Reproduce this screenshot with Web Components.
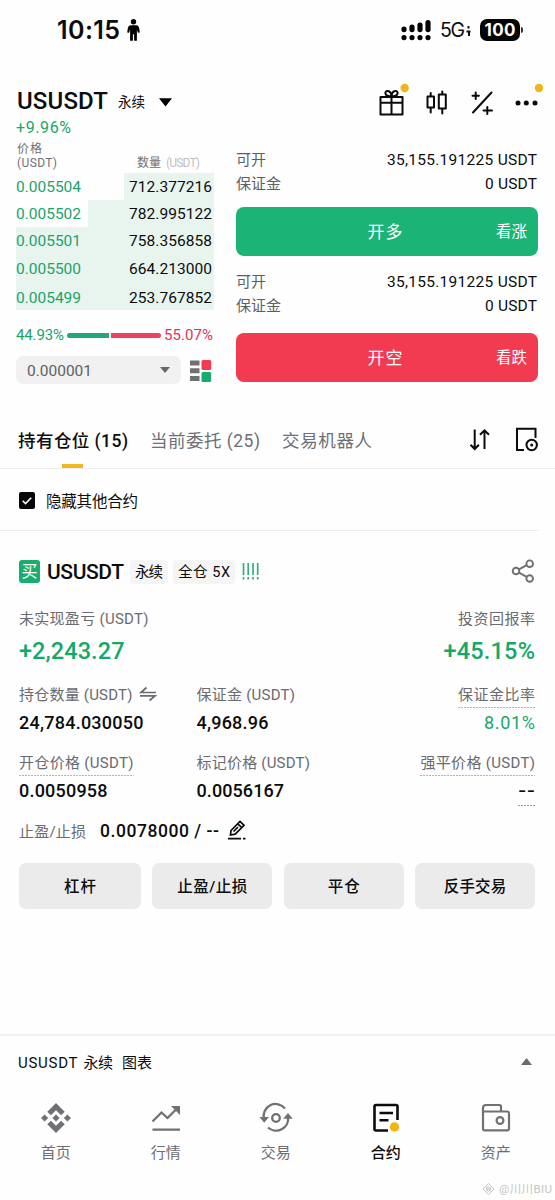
<!DOCTYPE html>
<html lang="zh-CN">
<head>
<meta charset="utf-8">
<title>USUSDT 永续</title>
<style>
body{margin:0;background:#fefefe;color:#0c0c0d;font-family:Roboto,"Noto Sans CJK SC",sans-serif;width:555px;height:1200px;overflow:hidden}
</style>
</head>
<body>
<trade-app></trade-app>
<script>
const fits = [];
function define(name, css, html, after) {
  customElements.define(name, class extends HTMLElement {
    connectedCallback() {
      if (this.shadowRoot) return;
      const markup = typeof html === 'function' ? html(n => this.getAttribute(n)) : html;
      this.attachShadow({ mode: 'open' }).innerHTML =
        `<style>:host{display:block;box-sizing:border-box}*{box-sizing:border-box}svg{display:block;flex:none;overflow:visible}${css}</style>${markup}`;
      if (after) after(this);
    }
  });
}

/* Single line of text whose tracking is adjusted to a given advance width. */
define('fit-text',
  ':host{display:inline-block;flex:none;white-space:nowrap;line-height:1}span{display:inline-block;transform:translateY(var(--dy,2px))}',
  '<span><slot></slot></span>', el => fits.push(el));

function fitAll() {
  for (const el of fits) {
    const w = parseFloat(el.getAttribute('w'));
    if (!w) continue;
    const n = [...el.textContent].length;
    const span = el.shadowRoot.querySelector('span');
    const ls = (w - span.getBoundingClientRect().width) / (n - 1);
    span.style.letterSpacing = ls + 'px';
    span.style.marginRight = -ls + 'px';
  }
}

define('status-bar',
  `:host{display:flex;height:60px;padding:0 32px 0 57px;align-items:center;font-family:Inter,sans-serif;--dy:0px}
   fit-text{font-size:25px;font-weight:600}.p{margin-left:6px}.s{margin-left:auto}.g{font-size:19.5px;font-weight:400;margin-left:9px;--dy:1px}
   .d{margin:0 9px 0 1px}.bat{background:#050505;color:#fff;border-radius:7px;width:40px;height:22px;display:flex;align-items:center;justify-content:center}
   .bat fit-text{font-size:17px;font-weight:700}.nub{width:2px;height:6px;background:#333;border-radius:0 2px 2px 0;margin-left:1px}`,
  `<fit-text w="63">10:15</fit-text>
   <svg class="p" width="14" height="22" viewBox="0 0 14 22"><circle cx="7.500" cy="2.700" r="2.700"/><path d="M4.500 6.300h6q2.200 0 2.600 2.500l.7 4.700-1.900.3-1-3.300V21.700H8.100v-6.500H6.900v6.500H4.100V10.500l-1 3.300-1.900-.3.700-4.700Q2.300 6.300 4.500 6.300z"/></svg>
   <svg class="s" width="30" height="21" viewBox="0 0 30 21"><g stroke="#050505" stroke-width="5.200" stroke-linecap="round"><path d="M3 9v.6M11 7v2.600M19 5v4.600M27 2.700v6.900M3 17.600v.01M11 17.600v.01M19 17.600v.01M27 17.600v.01"/></g></svg>
   <fit-text class="g" w="25">5G</fit-text>
   <svg class="d" width="5" height="14" viewBox="0 0 5 14"><path d="M2.500 3v2.500M.5 8.500h4M3 9v4" stroke="#111" stroke-width="2"/></svg>
   <div class="bat"><fit-text w="31">100</fit-text></div><i class="nub"></i>`);

define('pair-header',
  `:host{display:flex;height:57px;padding:24px 12px 0 17px;align-items:flex-start}
   .n{font-size:24px;font-weight:500;margin-top:5px;--dy:0px}.y{font-size:13.500px;margin:11px 0 0 10px;--dy:1px}.t{margin:14px 0 0 14px}
   .i{margin-left:auto}`,
  `<fit-text class="n" w="91">USUSDT</fit-text><fit-text class="y" w="27">永续</fit-text>
   <svg class="t" width="13" height="9" viewBox="0 0 13 9"><path d="M0 .3h13L6.500 8.500z"/></svg>
   <svg class="i" width="164" height="34" viewBox="379 84 164 34" fill="none" stroke="#0b0b0b" stroke-width="2" stroke-linejoin="round" stroke-linecap="round">
    <path d="M380.500 97h22v17.500h-22zM380.500 102.700h22M391.500 97v17.500M391.500 96.500c-8 0-7-6-3.600-5.500 2.600.3 3.400 3 3.600 5.500.2-2.500 1-5.200 3.600-5.500 3.400-.5 4.400 5.500-3.600 5.500z"/>
    <path d="M427.500 96.500h6.500v11h-6.500zM438.800 94.500h7v14h-7zM430.700 93v3.500M430.700 107.500v5M442.300 91.500v3M442.300 108.500v5"/>
    <path d="M473 112.500L491.500 92.500M475.700 92.500v6.500M472.500 95.700h6.400M487.300 107v7M483.500 110.500h8.500"/>
    <g fill="#0b0b0b" stroke="none"><circle cx="518" cy="103" r="2.500"/><circle cx="526.300" cy="103" r="2.500"/><circle cx="535" cy="103" r="2.500"/></g>
    <g fill="#f0b619" stroke="none"><circle cx="404.700" cy="88" r="4.200"/><circle cx="539" cy="88" r="4.200"/></g></svg>`);

define('book-row',
  `:host{display:flex;align-items:center;justify-content:space-between;height:var(--h,27px);padding:0 2px 0 0;
   background:linear-gradient(#e8f5ef,#e8f5ef) right/var(--depth) 100% no-repeat;font-size:15.500px;--dy:.900px}
   .p{color:#1ba36b}`,
  a => `<fit-text class="p" w="65">${a('price')}</fit-text><fit-text w="83">${a('amount')}</fit-text>`);

define('order-book',
  `:host{width:198px;padding-top:1px}.pct{display:block;height:20px;line-height:20px;font-size:16px;color:#16a869;--dy:0px}
   .h{display:flex;height:35px;font-size:12px;color:#6e7176;justify-content:space-between;padding:5px 14px 0 1px;align-items:flex-start;--dy:-.500px}
   .h div{display:flex;flex-direction:column;gap:2px}.h .q{flex-direction:row;padding-top:14px;gap:5px}.q fit-text+fit-text{color:#c0c2c5}
   .r{display:flex;height:50px;align-items:center;font-size:15px;color:#1ba36b;margin-right:-1px;--dy:0px}
   .r i{height:5px;background:#20a977;border-radius:3px 0 0 3px;width:42px;margin-left:3px}
   .r i+i{background:#ec4460;border-radius:0 3px 3px 0;width:50px;margin:0 3px 0 2px}.r .d{color:#dd3458}
   .b{display:flex;gap:9px;align-items:center}.s{width:165px;height:28px;border-radius:7px;background:#f1f1f1;padding:0 11px;display:flex;align-items:center;justify-content:space-between;font-size:15.500px;color:#5e6063;margin-top:-4px}
   .b>svg{margin-top:-3px}`,
  `<fit-text class="pct" w="55">+9.96%</fit-text>
   <div class="h"><div><fit-text w="25">价格</fit-text><fit-text w="40">(USDT)</fit-text></div>
   <div class="q"><fit-text w="24">数量</fit-text><fit-text w="34">(USDT)</fit-text></div></div>
   <book-row price="0.005504" amount="712.377216" style="--depth:90px"></book-row>
   <book-row price="0.005502" amount="782.995122" style="--depth:126px"></book-row>
   <book-row price="0.005501" amount="758.356858" style="--depth:198px"></book-row>
   <book-row price="0.005500" amount="664.213000" style="--depth:198px;--h:29px"></book-row>
   <book-row price="0.005499" amount="253.767852" style="--depth:198px;--h:27px;padding-top:2px"></book-row>
   <div class="r"><fit-text w="48">44.93%</fit-text><i></i><i></i><fit-text class="d" w="49">55.07%</fit-text></div>
   <div class="b"><div class="s"><fit-text w="65">0.000001</fit-text><svg width="10" height="6" viewBox="0 0 10 6"><path d="M0 0h10L5 6z" fill="#66686b"/></svg></div>
   <svg width="21" height="22" viewBox="0 0 21 22"><path d="M0 .5h9.500v5H0zM0 8.200h9.500v5H0zM0 16h9.500v5H0z" fill="#707070"/><rect x="11.500" width="9.700" height="10" rx="1.500" fill="#f23b53"/><rect x="11.500" y="12" width="9.700" height="10" rx="1.500" fill="#14ac6f"/></svg></div>`);

define('trade-button',
  `:host{display:grid;grid-template-columns:1fr auto 1fr;align-items:center;height:49px;border-radius:8px;color:#fff;background:var(--c);padding:0 11px 0 7px;--dy:1px}
   .m{font-size:17px}.s{font-size:15.500px;justify-self:end}`,
  a => `<span></span><fit-text class="m" w="35">${a('label')}</fit-text><fit-text class="s" w="31">${a('hint')}</fit-text>`);

define('order-side',
  `:host{height:122px;--dy:.900px}.r{display:flex;justify-content:space-between;align-items:center;height:23.500px;font-size:15.500px;padding-right:1px}.k{color:#5c5f63;font-size:15px}trade-button{margin-top:var(--gap,12px)}`,
  a => `<div class="r"><fit-text class="k" w="30">可开</fit-text><fit-text w="150">35,155.191225 USDT</fit-text></div>
   <div class="r"><fit-text class="k" w="45">保证金</fit-text><fit-text w="52">0 USDT</fit-text></div>
   <trade-button label="${a('label')}" hint="${a('hint')}" style="--c:${a('color')}"></trade-button>`);

define('trade-desk',
  ':host{display:flex;gap:22px;height:291px;padding:0 17px 0 16px}.o{flex:1;padding-top:31px}',
  `<order-book></order-book><div class="o"><order-side label="开多" hint="看涨" color="#1bb376"></order-side>
   <order-side label="开空" hint="看跌" color="#f23a50" style="--gap:16px"></order-side></div>`);

define('position-tabs',
  `:host{display:flex;height:61px;border-bottom:1.500px solid #eeeeef;padding:0 17px 0 18px;font-size:17.500px;color:#6c6f74}
   .t{display:flex;align-items:center;position:relative;height:64px;margin-right:22px}
   .on{color:#0c0c0d;font-weight:500}.on::after{content:"";position:absolute;left:44px;bottom:4px;width:21px;height:4px;background:#efb921}
   .i{margin:20px 0 0 auto}`,
  `<div class="t on"><fit-text w="110">持有仓位 (15)</fit-text></div><div class="t"><fit-text w="110">当前委托 (25)</fit-text></div><div class="t"><fit-text w="90">交易机器人</fit-text></div>
   <svg class="i" width="68" height="24" viewBox="470 428 68 24" fill="none" stroke="#0b0b0b" stroke-width="2">
   <path d="M474.700 429.500v19M470.500 444.800l4.200 4.200 4.200-4.200M484.500 449v-18.500M480 434.800l4.500-4.500 4.500 4.500"/>
   <path d="M524 450h-7v-21.200h18.500V438"/><circle cx="531.700" cy="445" r="5.200"/><circle cx="531.700" cy="445" r="1.500" fill="#0b0b0b" stroke="none"/></svg>`);

define('filter-row',
  ':host{display:flex;height:62px;margin-right:17px;padding:2px 0 0 19px;border-bottom:1px solid #e9eaeb;align-items:center;gap:11px;font-size:15.500px}',
  `<svg width="16" height="17" viewBox="0 0 16 17"><rect width="16" height="17" rx="2" fill="#080808"/><path d="M3.700 8.700l2.800 2.800 5.700-5.700" fill="none" stroke="#fff" stroke-width="1.600"/></svg><fit-text w="92">隐藏其他合约</fit-text>`);

define('metric-item',
  `:host{display:flex;flex-direction:column;align-items:var(--al,flex-start)}
   .k{font-size:15px;color:#686b70;height:25px;line-height:25px;display:flex;align-items:center;gap:7px}
   .u{height:27px;padding-bottom:2px;margin-bottom:-2px;background:repeating-linear-gradient(90deg,#b4b4b6 0 2px,transparent 2px 3px) bottom/100% 1px no-repeat}
   .v{font-size:18px;font-weight:500;line-height:31px;margin-top:1px;color:var(--vc,#0c0c0d);--dy:.400px}
   :host([big]) .v{font-size:23.500px;line-height:37px;--dy:1.500px}:host([thin]) .v{font-weight:400}
   .dash{font-family:Inter,sans-serif;background:repeating-linear-gradient(90deg,#9b9b9d 0 2px,transparent 2px 3px) bottom/100% 1px no-repeat}`,
  a => `<div class="k ${a('under') !== null ? 'u' : ''}"><fit-text w="${a('kw')}">${a('k')}</fit-text><slot></slot></div>
   <fit-text class="v ${a('dash') !== null ? 'dash' : ''}" w="${a('vw')}">${a('v')}</fit-text>`);

define('action-button',
  ':host{display:flex;align-items:center;justify-content:center;height:46px;border-radius:7px;background:#ebebeb;font-size:15.500px;font-weight:500}',
  a => `<fit-text w="${a('w')}">${a('label')}</fit-text>`);

define('position-card',
  `:host{padding:27px 20px 0 19px;height:503px}
   .h{display:flex;height:27px;align-items:center;--dy:1.500px}
   .b{width:21px;height:23px;border-radius:3px;background:#19ae70;color:#fff;display:flex;align-items:center;justify-content:center;font-size:16px;line-height:23px}
   .n{font-size:21px;font-weight:500;margin:0 6px 0 7px;--dy:.500px}.g{background:#f5f5f6;border-radius:4px;height:24px;padding:0 5px;display:flex;align-items:center;font-size:14.500px;margin-right:6px}.g+.g{margin-left:-1px;margin-right:7px}
   .sh{margin-left:auto;margin-top:-1px}
   .g3{display:grid;grid-template-columns:177.500px 1fr auto;height:68px}.r{--al:flex-end}.gr{--vc:#14a968}
   .top{display:flex;justify-content:space-between;margin-top:20px;height:76px}
   .tp{display:flex;align-items:center;height:22px;font-size:15px;color:#686b70;margin-top:2px}.tp .v{font-size:17.500px;font-weight:500;color:#0c0c0d;margin:0 9px 0 14px;--dy:1.500px}
   .a{display:grid;grid-template-columns:122px 120px 120px 120px;justify-content:space-between;margin-top:22px}`,
  `<div class="h"><span class="b">买</span><fit-text class="n" w="77">USUSDT</fit-text><span class="g"><fit-text w="28">永续</fit-text></span><span class="g"><fit-text w="52">全仓 5X</fit-text></span>
   <svg width="17" height="17" viewBox="0 0 17 17"><path d="M1.500 0v12M6.200 0v12M11 0v12M15.700 0v12M1.500 14v2.500M6.200 14v2.500M11 14v2.500M15.700 14v2.500" stroke="#38ad7b" stroke-width="1.700"/></svg>
   <svg class="sh" width="23" height="24" viewBox="0 0 23 24" fill="none" stroke="#707174" stroke-width="1.900"><circle cx="4" cy="12" r="3.300"/><circle cx="17.700" cy="4.700" r="3.300"/><circle cx="17.700" cy="19.500" r="3.300"/><path d="M7 10.400l7.700-4.200M7 13.700l7.700 4.200"/></svg></div>
   <div class="top"><metric-item big class="gr" k="未实现盈亏 (USDT)" kw="129.500" v="+2,243.27" vw="105.500"></metric-item><metric-item big class="r gr" k="投资回报率" kw="77" v="+45.15%" vw="91.500"></metric-item></div>
   <div class="g3"><metric-item k="持仓数量 (USDT)" kw="113.500" v="24,784.030050" vw="124.500"><svg width="16" height="14" viewBox="0 0 16 14" fill="none" stroke="#686b70" stroke-width="1.700"><path d="M6.500.500L1 5.500h15M0 8.800h15L9.500 13.500"/></svg></metric-item>
   <metric-item k="保证金 (USDT)" kw="98.500" v="4,968.96" vw="72"></metric-item><metric-item under thin class="r gr" k="保证金比率" kw="77" v="8.01%" vw="51"></metric-item></div>
   <div class="g3"><metric-item under k="开仓价格 (USDT)" kw="114.500" v="0.0050958" vw="88.500"></metric-item>
   <metric-item k="标记价格 (USDT)" kw="113.500" v="0.0056167" vw="87.500"></metric-item><metric-item under dash class="r" k="强平价格 (USDT)" kw="114.500" v="--" vw="17"></metric-item></div>
   <div class="tp"><fit-text w="67">止盈/止损</fit-text><fit-text class="v" w="119">0.0078000 / --</fit-text>
   <svg width="19" height="20" viewBox="0 0 19 20" fill="none" stroke="#0b0b0b" stroke-width="1.700"><path d="M3 10.500L12 1.500l4 3.800L7.200 14.200 2.500 15zM9.800 3.800l4 3.800M5.500 11.500l4.500-4.500M0 18.700h13M15 18.700h2.500"/></svg></div>
   <div class="a"><action-button w="32" label="杠杆"></action-button><action-button w="70" label="止盈/止损"></action-button><action-button w="32" label="平仓"></action-button><action-button w="62.500" label="反手交易"></action-button></div>`);

define('chart-bar',
  ':host{display:flex;height:56px;border-top:2px solid #f1f1f2;padding:0 23px 3px 18px;align-items:center;font-size:15px;}svg{margin-left:auto}fit-text{margin-right:6px}fit-text+fit-text{margin-right:9px}',
  `<fit-text w="59.500">USUSDT</fit-text><fit-text w="29.500">永续</fit-text><fit-text w="30">图表</fit-text><svg width="11" height="7" viewBox="0 0 11 7"><path d="M5.500 0L11 7H0z" fill="#6b6d70"/></svg>`);

define('nav-item',
  ':host{display:flex;flex-direction:column;align-items:center;gap:11px;color:#6b6d71;font-size:15px}:host([active]){color:#0b0b0b;font-weight:500}',
  a => `<slot></slot><fit-text w="30">${a('label')}</fit-text>`);

define('bottom-nav',
  ':host{display:grid;grid-template-columns:repeat(5,110px);padding:13px 0 0 .800px;height:92px}',
  `<nav-item label="首页"><svg width="30" height="30" viewBox="0 0 30 30" fill="#707174"><path d="M15 0l8.700 8.700-3.600 3.600L15 7.200l-5.100 5.100-3.600-3.600zM15 30l-8.700-8.700 3.600-3.600 5.100 5.100 5.100-5.100 3.600 3.600zM3.600 11.400L7.200 15l-3.600 3.600L0 15zM26.400 11.400L30 15l-3.600 3.600-3.600-3.600zM15 11.400l3.600 3.600-3.600 3.600-3.600-3.600z"/></svg></nav-item>
   <nav-item label="行情"><svg width="30" height="30" viewBox="0 0 30 30" fill="none" stroke="#707174" stroke-width="2.300"><path d="M1.500 18.500l9-9 6 5.500L27 4.500M1.500 26.700h27.500"/><path d="M20 3h9v9z" fill="#707174" stroke="none"/></svg></nav-item>
   <nav-item label="交易"><svg width="34" height="30" viewBox="0 0 34 30" fill="none" stroke="#707174" stroke-width="2.300"><path d="M5 16A12 12 0 0 1 26 5.500M9 24.500A12 12 0 0 0 29 14"/><path d="M.5 14h9.500L5.200 19.700zM24.200 15.800h9.500L29 10z" fill="#707174" stroke="none"/><circle cx="17" cy="15" r="3.800"/></svg></nav-item>
   <nav-item label="合约" active><svg width="30" height="30" viewBox="0 0 30 30" fill="none" stroke="#0b0b0b" stroke-width="2.600"><path d="M17 27.500H5q-1.500 0-1.500-1.500V3.500Q3.500 2 5 2h20q1.500 0 1.500 1.500V17M8.500 10h13.500M8.500 17.200h9"/><circle cx="23.500" cy="24" r="4.700" fill="#f3b50e" stroke="none"/></svg></nav-item>
   <nav-item label="资产"><svg width="30" height="30" viewBox="0 0 30 30" fill="none" stroke="#707174" stroke-width="2.200"><path d="M2 8.500V25.500q0 1.800 1.800 1.800h22.400q1.800 0 1.800-1.800V10.300q0-1.800-1.800-1.800H2M2 9V4.800Q2 2 5 2h13.500q1.500 0 1.500 1.500V8"/><circle cx="19" cy="17.500" r="3.400"/></svg></nav-item>`);

define('source-mark',
  ':host{display:flex;justify-content:flex-end;align-items:center;gap:4px;padding-right:3px;height:12px;margin-top:1px;font-size:11.500px;color:#c4c5c6;--dy:.500px}',
  `<svg width="13" height="12" viewBox="0 0 30 30" fill="none" stroke="#c4c5c6" stroke-width="2.500"><path d="M15 1l14 14-14 14L1 15zM15 9l6 6-6 6-6-6zM8 8l14 14M22 8L8 22"/></svg><fit-text w="53">@川川BIU</fit-text>`);

define('trade-app', '',
  `<status-bar></status-bar><pair-header></pair-header><trade-desk></trade-desk><position-tabs></position-tabs>
   <filter-row></filter-row><position-card></position-card><chart-bar></chart-bar><bottom-nav></bottom-nav><source-mark></source-mark>`);
fitAll();
</script>
</body>
</html>
